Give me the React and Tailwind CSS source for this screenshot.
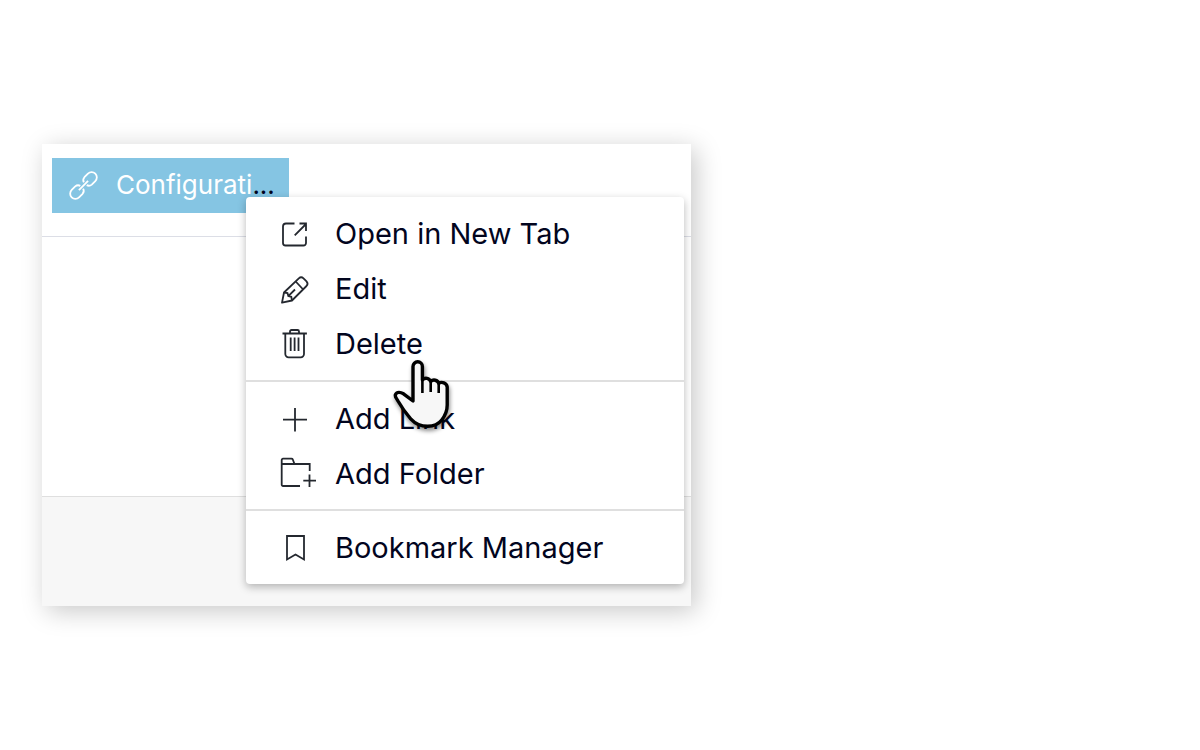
import React from 'react';

function Icon({ children }) {
  return (
    <svg
      width="36"
      height="35"
      viewBox="0 0 36 35"
      fill="none"
      stroke="#24282f"
      strokeWidth="1.8"
      className="shrink-0"
      aria-hidden="true"
    >
      {children}
    </svg>
  );
}

const OpenIcon = () => (
  <Icon>
    <path d="M14.5 7.5H6a3 3 0 0 0-3 3V27a2.5 2.5 0 0 0 2.5 2.5H23.5a2.5 2.5 0 0 0 2.5-2.5V20.5" />
    <path d="M14.7 19.3 26 8M19.5 7.5H26V15" />
  </Icon>
);

const EditIcon = () => (
  <Icon>
    <path d="M2 31.7 4 21.5 18.8 7.3a3.5 3.5 0 0 1 4.7 0l3 3a3.5 3.5 0 0 1 0 4.700L12 29.500Z" strokeLinejoin="round" />
    <path d="M15.7 10.5l7.5 8M4 21.5l3.5.5.8 3 3 .8.7 3.7M8.3 25.2 15 18.5" />
  </Icon>
);

const DeleteIcon = () => (
  <Icon>
    <path d="M2.5 7.5h24.4M10 7V5.5a1.5 1.5 0 0 1 1.5-1.5h6A1.5 1.5 0 0 1 19 5.5V7" />
    <path d="M5.3 7.5V28a3.3 3.3 0 0 0 3.3 3.3h12.1A3.3 3.3 0 0 0 24 28V7.5" />
    <path d="M10.7 11.5v13.5M14.6 11.5v13.5M18.5 11.5v13.5" />
  </Icon>
);

const PlusIcon = () => (
  <Icon>
    <path d="M15 7v23.5M3 18.7h24" />
  </Icon>
);

const FolderIcon = () => (
  <Icon>
    <path d="M20 30H3a1.3 1.3 0 0 1-1.3-1.3V4a1.3 1.3 0 0 1 1.3-1.3h8.5a1.5 1.5 0 0 1 1.3.8L14.5 8h15.2V15M1.7 8h12.8" />
    <path d="M29.5 18.5V31M23.3 24.7H36" />
  </Icon>
);

const BookmarkIcon = () => (
  <Icon>
    <path d="M7 6h17v23.5l-8.5-5-8.5 5Z" />
  </Icon>
);

const LinkIcon = () => (
  <svg width="30" height="30" viewBox="0 0 30 30" fill="none" stroke="#fff" strokeWidth="1.8" className="shrink-0" aria-hidden="true">
    <g transform="translate(14.5 14.5) rotate(-45)">
      <path d="M-2.5 2A4.5 4.5 0 0 1-6.5 5.2H-11.5a5.2 5.2 0 0 1 0-10.4H-6.5A4.5 4.5 0 0 1-2.5-2" />
      <path d="M2.5-2A4.5 4.5 0 0 1 6.5-5.2H11.5a5.2 5.2 0 0 1 0 10.4H6.5A4.5 4.5 0 0 1 2.5 2" />
      <path d="M-6.5 0H6.5" />
    </g>
  </svg>
);

function HandCursor() {
  return (
    <svg
      width="64"
      height="76"
      viewBox="0 0 64 76"
      className="pointer-events-none absolute top-[214px] left-[349px] drop-shadow-[1px_3px_2px_rgba(0,0,0,0.45)]"
      aria-hidden="true"
    >
      <path
        d="M22 43V8.5a4.700 4.700 0 0 1 9.400 0V22c2.500-3 7-2 8.300 1.500 2.500-2.500 7-1.500 8 1.800 3-2 8-.5 8.500 3.700V47c0 6-1.500 10-5.500 15-3.500 4.500-8 6.300-14 6.300-7 0-12-2-17-7.500C15 55.500 11 50 7 43 5.500 40 3.500 39 4.500 36.500c1.500-3 5-2.500 8-.7Z"
        fill="#f7f7f7"
        stroke="#000"
        strokeWidth="3.4"
        strokeLinejoin="round"
      />
      <path d="M31.4 21v14M39.700 23v11M47.700 25v10" stroke="#000" strokeWidth="2.6" />
    </svg>
  );
}

const groups = [
  [
    { label: 'Open in New Tab', icon: OpenIcon },
    { label: 'Edit', icon: EditIcon },
    { label: 'Delete', icon: DeleteIcon },
  ],
  [
    { label: 'Add Link', icon: PlusIcon },
    { label: 'Add Folder', icon: FolderIcon },
  ],
  [{ label: 'Bookmark Manager', icon: BookmarkIcon }],
];

function ContextMenu() {
  return (
    <div
      role="menu"
      className="absolute top-[53px] left-[204px] w-[438px] divide-y-2 divide-[#dfdfdf] rounded-[4px] bg-white shadow-[0_3px_8px_rgba(0,0,0,0.28)]"
    >
      {groups.map((items) => (
        <div key={items[0].label} role="group" className="pt-[9px] pb-2 first:pb-[9px] last:pb-[9px]">
          {items.map(({ label, icon: ItemIcon }) => (
            <button
              key={label}
              type="button"
              role="menuitem"
              className="flex h-[55px] w-full items-center gap-[19px] pl-[34px] text-left text-[29px] text-[#02051e]"
            >
              <ItemIcon />
              {label}
            </button>
          ))}
        </div>
      ))}
    </div>
  );
}

export default function App() {
  return (
    <main className="min-h-screen bg-white px-[42px] py-36 font-['Inter',sans-serif]">
      <div className="relative w-full max-w-[649px] bg-white shadow-[5px_5px_24px_rgba(0,0,0,0.22)]">
        <header className="border-b border-[#dcdee6] px-2.5 pt-3.5 pb-[23px]">
          <button
            type="button"
            className="flex h-[55px] w-[237px] items-center gap-[17px] bg-[#85c5e3] pl-[17px] text-[26px] text-white"
          >
            <LinkIcon />
            <span className="pb-0.5">
              Configurati<span className="text-[#02051e]">...</span>
            </span>
          </button>
        </header>
        <div className="h-[259px]" />
        <footer className="h-[110px] border-t border-[#dfdfdf] bg-[#f7f7f7]" />
        <ContextMenu />
        <HandCursor />
      </div>
    </main>
  );
}
